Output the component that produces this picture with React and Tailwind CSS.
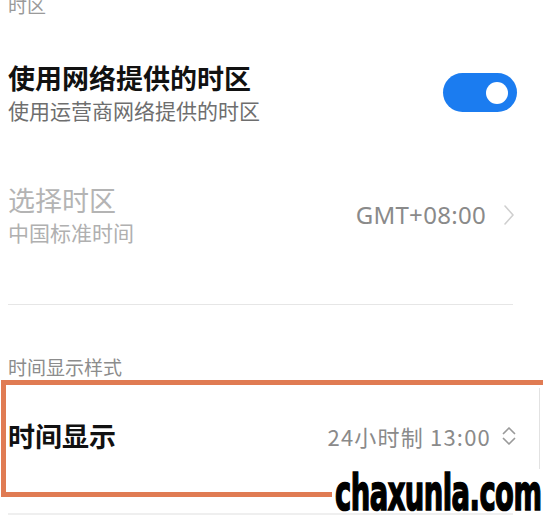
import React from "react";

export default function App() {
  return (
    <div className="relative w-[543px] h-[522px] overflow-hidden bg-white font-['Noto_Sans_CJK_SC','Noto_Sans',sans-serif]">
      {/* section header */}
      <div className="-mt-[5px] pl-2 text-[19px] leading-[20px] text-[#9a9a9a]">时区</div>

      {/* row 1 */}
      <div className="mt-[47px] flex items-center justify-between pl-2 pr-[26px]">
        <div>
          <div className="text-[27px] leading-[32px] font-semibold text-[#111]">使用网络提供的时区</div>
          <div className="mt-[3px] text-[21px] leading-[26px] text-[#6e6e6e]">使用运营商网络提供的时区</div>
        </div>
        <div className="flex h-[39px] w-[74px] items-center justify-end rounded-full bg-[#1b7cf0] pr-[9px]">
          <div className="h-[22px] w-[22px] rounded-full bg-white" />
        </div>
      </div>

      {/* row 2 (disabled) */}
      <div className="mt-[61px] flex items-center justify-between pl-2 pr-[28px]">
        <div>
          <div className="text-[27px] leading-[32px] text-[#b4b4b4]">选择时区</div>
          <div className="mt-[3px] text-[21px] leading-[26px] text-[#b0b0b0]">中国标准时间</div>
        </div>
        <div className="flex items-center gap-[17px]">
          <span className="font-['Noto_Sans',sans-serif] text-[24px] leading-[28px] tracking-[0.3px] text-[#8a8a8a]">GMT+08:00</span>
          <svg width="12" height="22" viewBox="0 0 12 22" fill="none">
            <path d="M2 2 L10 11 L2 20" stroke="#cfcfcf" strokeWidth="1.6" strokeLinecap="round" strokeLinejoin="round" />
          </svg>
        </div>
      </div>

      {/* divider */}
      <div className="ml-2 mt-[59px] h-px w-[505px] bg-[#e6e6e6]" />

      {/* section header 2 */}
      <div className="mt-[52px] pl-2 text-[19px] leading-[20px] text-[#8c8c8c]">时间显示样式</div>

      {/* highlighted row */}
      <div className="relative ml-px mt-[3px] w-[560px] border-[5px] border-[#e07b53]">
        <div className="flex h-[107px] w-[511px] items-center justify-between pb-[6px] pl-[2px]">
          <div className="text-[27px] leading-[32px] font-semibold text-[#111]">时间显示</div>
          <div className="flex items-center gap-[10px]">
            <span className="text-[22px] leading-[28px] tracking-[1.2px] text-[#8a8a8a]">24小时制 13:00</span>
            <svg width="16" height="22" viewBox="0 0 16 22" fill="none">
              <path d="M2.5 8.5 L8 3 L13.5 8.5" stroke="#9a9a9a" strokeWidth="1.7" strokeLinecap="round" strokeLinejoin="round" />
              <path d="M2.5 13.5 L8 19 L13.5 13.5" stroke="#9a9a9a" strokeWidth="1.7" strokeLinecap="round" strokeLinejoin="round" />
            </svg>
          </div>
        </div>
        <div className="absolute left-[533px] top-[3px] h-[90px] w-px bg-[#e2e2e2]" />
      </div>

      {/* bottom separator */}
      <div className="ml-2 mt-[16px] h-[2px] w-[505px] bg-[#efefef]" />

      {/* watermark */}
      <div className="absolute left-[332px] top-[469px] h-[44px] w-[211px] bg-white">
        <div className="ml-[3px] origin-left scale-x-[0.56] whitespace-nowrap font-['DejaVu_Sans',sans-serif] text-[49px] font-bold leading-[49px] tracking-[-1px] text-black [-webkit-text-stroke:1.7px_black]">
          chaxunla.com
        </div>
      </div>
    </div>
  );
}
